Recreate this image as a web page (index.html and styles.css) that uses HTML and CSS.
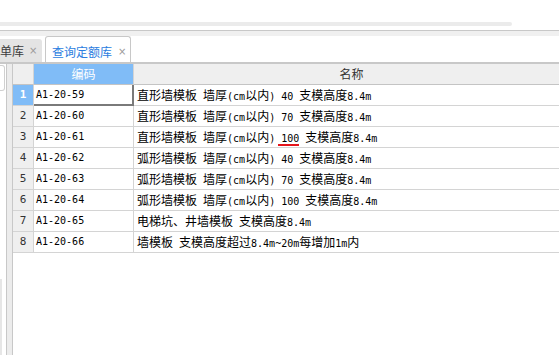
FILE: index.html
```html
<!DOCTYPE html>
<html lang="zh-CN">
  <head>
    <meta charset="UTF-8" />
    <title>查询定额库</title>
    <link rel="stylesheet" href="styles.css">
  </head>
  <body>
    <div class="topbar"><div class="hscroll"></div></div>
    <div class="band"></div>

    <div class="tabs">
      <div class="tab">单库<span class="close">×</span></div>
      <div class="tab active">查询定额库<span class="close">×</span></div>
    </div>

    <div class="main">
      <div class="side">
        <div class="side-box"></div>
        <div class="side-scroll"></div>
      </div>
      <div class="split"></div>
      <div class="grid">
        <table>
          <colgroup>
            <col class="c-num" />
            <col class="c-code" />
            <col class="c-name" />
          </colgroup>
          <thead>
            <tr>
              <th></th>
              <th class="on">编码</th>
              <th>名称</th>
            </tr>
          </thead>
          <tbody>
            <tr>
              <td class="num on">1</td>
              <td class="code sel">A1-20-59</td>
              <td class="name">直形墙模板<span class="a"> </span>墙厚<span class="a">(cm</span>以内<span class="a">) 40 </span>支模高度<span class="a">8.4m</span></td>
            </tr>
            <tr>
              <td class="num">2</td>
              <td class="code">A1-20-60</td>
              <td class="name">直形墙模板<span class="a"> </span>墙厚<span class="a">(cm</span>以内<span class="a">) 70 </span>支模高度<span class="a">8.4m</span></td>
            </tr>
            <tr>
              <td class="num">3</td>
              <td class="code">A1-20-61</td>
              <td class="name">直形墙模板<span class="a"> </span>墙厚<span class="a">(cm</span>以内<span class="a">) </span><span class="a err">100</span><span class="a"> </span>支模高度<span class="a">8.4m</span></td>
            </tr>
            <tr>
              <td class="num">4</td>
              <td class="code">A1-20-62</td>
              <td class="name">弧形墙模板<span class="a"> </span>墙厚<span class="a">(cm</span>以内<span class="a">) 40 </span>支模高度<span class="a">8.4m</span></td>
            </tr>
            <tr>
              <td class="num">5</td>
              <td class="code">A1-20-63</td>
              <td class="name">弧形墙模板<span class="a"> </span>墙厚<span class="a">(cm</span>以内<span class="a">) 70 </span>支模高度<span class="a">8.4m</span></td>
            </tr>
            <tr>
              <td class="num">6</td>
              <td class="code">A1-20-64</td>
              <td class="name">弧形墙模板<span class="a"> </span>墙厚<span class="a">(cm</span>以内<span class="a">) 100 </span>支模高度<span class="a">8.4m</span></td>
            </tr>
            <tr>
              <td class="num">7</td>
              <td class="code">A1-20-65</td>
              <td class="name">电梯坑、井墙模板<span class="a"> </span>支模高度<span class="a">8.4m</span></td>
            </tr>
            <tr>
              <td class="num">8</td>
              <td class="code">A1-20-66</td>
              <td class="name">墙模板<span class="a"> </span>支模高度超过<span class="a">8.4m~20m</span>每增加<span class="a">1m</span>内</td>
            </tr>
          </tbody>
        </table>
      </div>
    </div>
  </body>
</html>
```

FILE: styles.css
```css
* {
  box-sizing: border-box;
}
body {
  margin: 0;
  width: 559px;
  height: 355px;
  overflow: hidden;
  background: #fff;
  font-family: "Noto Sans CJK SC", sans-serif;
  font-size: 12px;
  color: #222;
}
.topbar {
  height: 30px;
  padding-top: 22px;
}
.hscroll {
  width: 512px;
  height: 4px;
  background: #ebebeb;
  border-radius: 0 2px 2px 0;
}
.band {
  height: 6px;
  border-top: 1px solid #c8c8c8;
  background: #f0f0f0;
}
.tabs {
  display: flex;
  align-items: flex-end;
  gap: 3px;
  height: 28px;
  border-bottom: 2px solid #c8c8c8;
}
.tab {
  display: flex;
  align-items: center;
  width: 42px;
  height: 23px;
  padding-top: 1px;
  background: #e4e4e4;
  border-radius: 0 3px 0 0;
  color: #3c3c3c;
  line-height: 12px;
  white-space: nowrap;
}
.tab.active {
  width: 86px;
  height: 26px;
  padding: 4px 0 0 6px;
  background: #fff;
  border: 1px solid #c8c8c8;
  border-bottom: none;
  border-radius: 3px 3px 0 0;
  color: #2b7de0;
}
.close {
  margin-left: 5px;
  font-family: "DejaVu Sans", sans-serif;
  font-size: 10px;
  color: #9a9a9a;
}
.tab.active .close {
  margin-left: 6px;
}
.main {
  display: flex;
  height: 291px;
}
.side {
  display: flex;
  flex-direction: column;
  justify-content: space-between;
  width: 6px;
}
.side-box {
  width: 5px;
  height: 26px;
  margin-top: 1px;
  border: 1px solid #d0d0d0;
  border-left: none;
  border-radius: 0 3px 3px 0;
}
.side-scroll {
  width: 2px;
  height: 76px;
  background: #e6e6e6;
}
.split {
  width: 6px;
  border-left: 1px solid #c8c8c8;
  background: #ececec;
}
.grid {
  flex: 1;
  overflow: hidden;
  border-left: 1px solid #c8c8c8;
}
table {
  width: 557px;
  table-layout: fixed;
  border-collapse: separate;
  border-spacing: 0;
}
.c-num {
  width: 21px;
}
.c-code {
  width: 100px;
}
.c-name {
  width: 436px;
}
th,
td {
  height: 20px;
  padding: 0;
  border-right: 1px solid #d4d4d4;
  border-bottom: 1px solid #d4d4d4;
  white-space: nowrap;
  overflow: hidden;
  line-height: 20px;
}
th {
  background: #efefef;
  border-bottom-color: #c4c4c4;
  font-weight: normal;
  color: #333;
}
th.on {
  background: #80bcf7;
  color: #fff;
}
.a,
.code,
.num {
  font-family: "DejaVu Sans Mono", monospace;
  font-size: 10px;
}
.a {
  line-height: 10px;
}
.num {
  text-align: center;
  background: #efefef;
  color: #333;
  font-size: 11px;
}
.num.on {
  background: #80bcf7;
  color: #fff;
  font-weight: bold;
}
.code {
  padding-left: 2px;
  color: #000;
}
.code.sel {
  border-right-color: #7a7a7a;
  border-bottom-color: #7a7a7a;
  box-shadow: inset -1px -1px 0 #7a7a7a;
}
.name {
  padding-left: 3px;
  color: #000;
}
.err {
  display: inline-block;
  line-height: 11px;
  margin-left: -3px;
  padding-left: 3px;
  border-bottom: 2px solid #e4141b;
}
```
